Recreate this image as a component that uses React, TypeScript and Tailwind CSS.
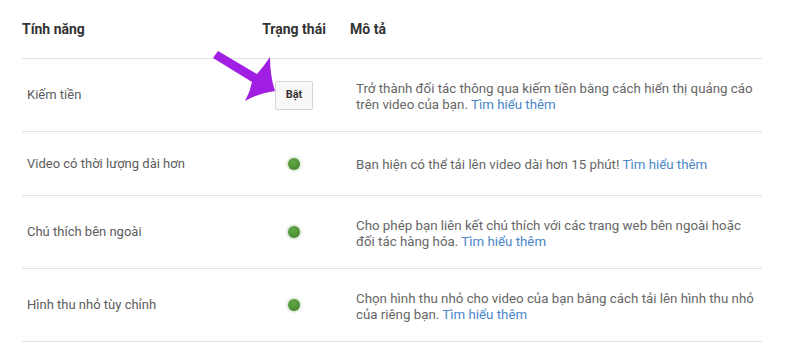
const rows = [
  {
    name: 'Kiếm tiền',
    status: 'button',
    lines: ['Trở thành đối tác thông qua kiếm tiền bằng cách hiển thị quảng cáo', 'trên video của bạn.'],
  },
  {
    name: 'Video có thời lượng dài hơn',
    status: 'dot',
    lines: ['Bạn hiện có thể tải lên video dài hơn 15 phút!'],
  },
  {
    name: 'Chú thích bên ngoài',
    status: 'dot',
    lines: ['Cho phép bạn liên kết chú thích với các trang web bên ngoài hoặc', 'đối tác hàng hóa.'],
  },
  {
    name: 'Hình thu nhỏ tùy chỉnh',
    status: 'dot',
    lines: ['Chọn hình thu nhỏ cho video của bạn bằng cách tải lên hình thu nhỏ', 'của riêng bạn.'],
  },
];

function Arrow() {
  return (
    <svg className="absolute left-0 top-0 pointer-events-none" width="300" height="120" viewBox="0 0 300 120">
      <path
        d="M218 51 L257 74 Q264 66 270 57 Q270 76 275 91 Q259 93 245 101 Q250 92 252 82 L213 58 Z"
        fill="#a11fe3"
      />
    </svg>
  );
}

export default function App() {
  return (
    <div className="relative w-[800px] h-[350px] bg-white font-['Roboto',sans-serif]">
      <div className="pl-[22px] w-[762px]">
        {/* header */}
        <div className="grid grid-cols-[228px_88px_1fr] h-[59px] items-center border-b border-[#e3e3e3] text-[14px] font-bold text-[#333]">
          <div>Tính năng</div>
          <div className="text-center">Trạng thái</div>
          <div className="pl-[12px]">Mô tả</div>
        </div>

        {rows.map((r) => (
          <div
            key={r.name}
            className={`grid grid-cols-[228px_88px_1fr] items-center border-b border-[#e3e3e3] ${r.lines.length > 1 ? 'h-[73px]' : 'h-[64px]'}`}
          >
            <div className="pl-[5px] text-[13px] text-[#5c5c5c]">{r.name}</div>
            <div className="flex justify-center">
              {r.status === 'button' ? (
                <button className="w-[38px] h-[29px] rounded-[2px] border border-[#d6d6d6] bg-[#f8f8f8] text-[11px] font-bold text-[#333]">
                  Bật
                </button>
              ) : (
                <span className="block w-[12px] h-[12px] rounded-full bg-[radial-gradient(circle_at_40%_35%,#63a848,#3f7f2a)] shadow-[0_0_3px_1px_rgba(90,150,60,0.35)]" />
              )}
            </div>
            <div className="pl-[18px] pt-[3px] text-[13.3px] leading-[16px] text-[#666] whitespace-nowrap">
              {r.lines.map((l, i) => (
                <div key={i}>
                  {l}
                  {i === r.lines.length - 1 && <span className="text-[#4a86c8]"> Tìm hiểu thêm</span>}
                </div>
              ))}
            </div>
          </div>
        ))}
      </div>
      <Arrow />
    </div>
  );
}
